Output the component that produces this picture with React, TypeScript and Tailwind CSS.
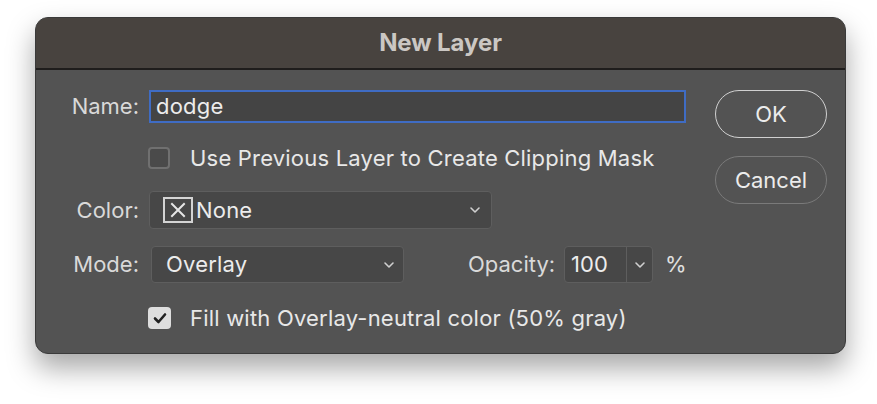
import React from "react";

function Chevron({ className = "" }: { className?: string }) {
  return (
    <svg width="12" height="8" viewBox="0 0 12 8" className={className}>
      <path d="M2 2 L6 6 L10 2" fill="none" stroke="#d0d0d0" strokeWidth="1.6" strokeLinecap="round" strokeLinejoin="round" />
    </svg>
  );
}

export default function App() {
  return (
    <div
      className="w-[877px] h-[404px] bg-white pt-[17px] pl-[35px]"
      style={{ fontFamily: "Inter, 'Noto Sans', sans-serif" }}
    >
      <div className="w-[811px] h-[337px] rounded-[13px] bg-[#535353] border border-[#3a3a3a] shadow-[0_14px_28px_rgba(0,0,0,0.35)] overflow-hidden flex flex-col">
        <div className="h-[52px] shrink-0 bg-[#48433f] border-b-2 border-[#1f1d1c] flex items-center justify-center">
          <span className="text-[24px] font-bold text-[#cbc7c3] tracking-[-0.1px]">New Layer</span>
        </div>
        <div className="flex flex-1">
          <div className="flex flex-col pt-[20px] w-[679px]">
            {/* Name */}
            <div className="flex items-center h-[33px]">
              <span className="w-[103px] text-right text-[22px] text-[#d9d9d9]">Name:</span>
              <div className="ml-[10px] w-[537px] h-[33px] bg-[#444444] border-2 border-[#3f6cc4] flex items-center px-[5px]">
                <span className="text-[22px] text-[#ececec] tracking-[0.2px]">dodge</span>
              </div>
            </div>
            {/* Clip checkbox */}
            <div className="flex items-center h-[22px] mt-[24px] ml-[112px]">
              <div className="w-[22px] h-[22px] rounded-[4px] border-2 border-[#707070] bg-[#4a4a4a]" />
              <span className="ml-[20px] text-[22px] text-[#e8e8e8] tracking-[0.2px]">Use Previous Layer to Create Clipping Mask</span>
            </div>
            {/* Color */}
            <div className="flex items-center h-[38px] mt-[22px]">
              <span className="w-[103px] text-right text-[22px] text-[#d9d9d9]">Color:</span>
              <div className="ml-[10px] w-[343px] h-[38px] bg-[#474747] border border-[#5e5e5e] rounded-[4px] flex items-center pl-[13px] pr-[10px]">
                <div className="w-[30px] h-[26px] border-2 border-[#d4d4d4] flex items-center justify-center">
                  <svg width="16" height="16" viewBox="0 0 16 16">
                    <path d="M2 2 L14 14 M14 2 L2 14" stroke="#e6e6e6" strokeWidth="2" strokeLinecap="square" />
                  </svg>
                </div>
                <span className="ml-[3px] text-[22px] text-[#ececec] tracking-[0.2px]">None</span>
                <Chevron className="ml-auto" />
              </div>
            </div>
            {/* Mode */}
            <div className="flex items-center h-[37px] mt-[17px]">
              <span className="w-[103px] text-right text-[22px] text-[#d9d9d9]">Mode:</span>
              <div className="ml-[12px] w-[253px] h-[37px] bg-[#474747] border border-[#5e5e5e] rounded-[4px] flex items-center pl-[14px] pr-[8px]">
                <span className="text-[22px] text-[#ececec] tracking-[0.2px]">Overlay</span>
                <Chevron className="ml-auto" />
              </div>
              <span className="ml-[64px] text-[22px] text-[#d9d9d9]">Opacity:</span>
              <div className="ml-[9px] w-[89px] h-[37px] bg-[#474747] border border-[#5e5e5e] rounded-[4px] flex items-stretch">
                <div className="w-[62px] flex items-center pl-[6px] border-r border-[#5e5e5e]">
                  <span className="text-[22px] text-[#ececec]">100</span>
                </div>
                <div className="flex-1 flex items-center justify-center">
                  <Chevron />
                </div>
              </div>
              <span className="ml-[12px] text-[22px] text-[#e0e0e0]">%</span>
            </div>
            {/* Fill checkbox */}
            <div className="flex items-center h-[22px] mt-[24px] ml-[112px]">
              <div className="w-[23px] h-[22px] rounded-[4px] bg-[#dedede] flex items-center justify-center">
                <svg width="14" height="12" viewBox="0 0 14 12">
                  <path d="M2 6.5 L5.5 10 L12 2.5" fill="none" stroke="#222" strokeWidth="2.6" strokeLinecap="round" strokeLinejoin="round" />
                </svg>
              </div>
              <span className="ml-[19px] text-[22px] text-[#e8e8e8] tracking-[0.2px]">Fill with Overlay-neutral color (50% gray)</span>
            </div>
          </div>
          <div className="flex flex-col pt-[20px]">
            <div className="w-[112px] h-[48px] rounded-full border-[1.5px] border-[#d0d0d0] flex items-center justify-center">
              <span className="text-[22px] text-[#ececec]">OK</span>
            </div>
            <div className="mt-[18px] w-[112px] h-[48px] rounded-full border-[1.5px] border-[#7a7a7a] flex items-center justify-center">
              <span className="text-[22px] text-[#ececec]">Cancel</span>
            </div>
          </div>
        </div>
      </div>
    </div>
  );
}
